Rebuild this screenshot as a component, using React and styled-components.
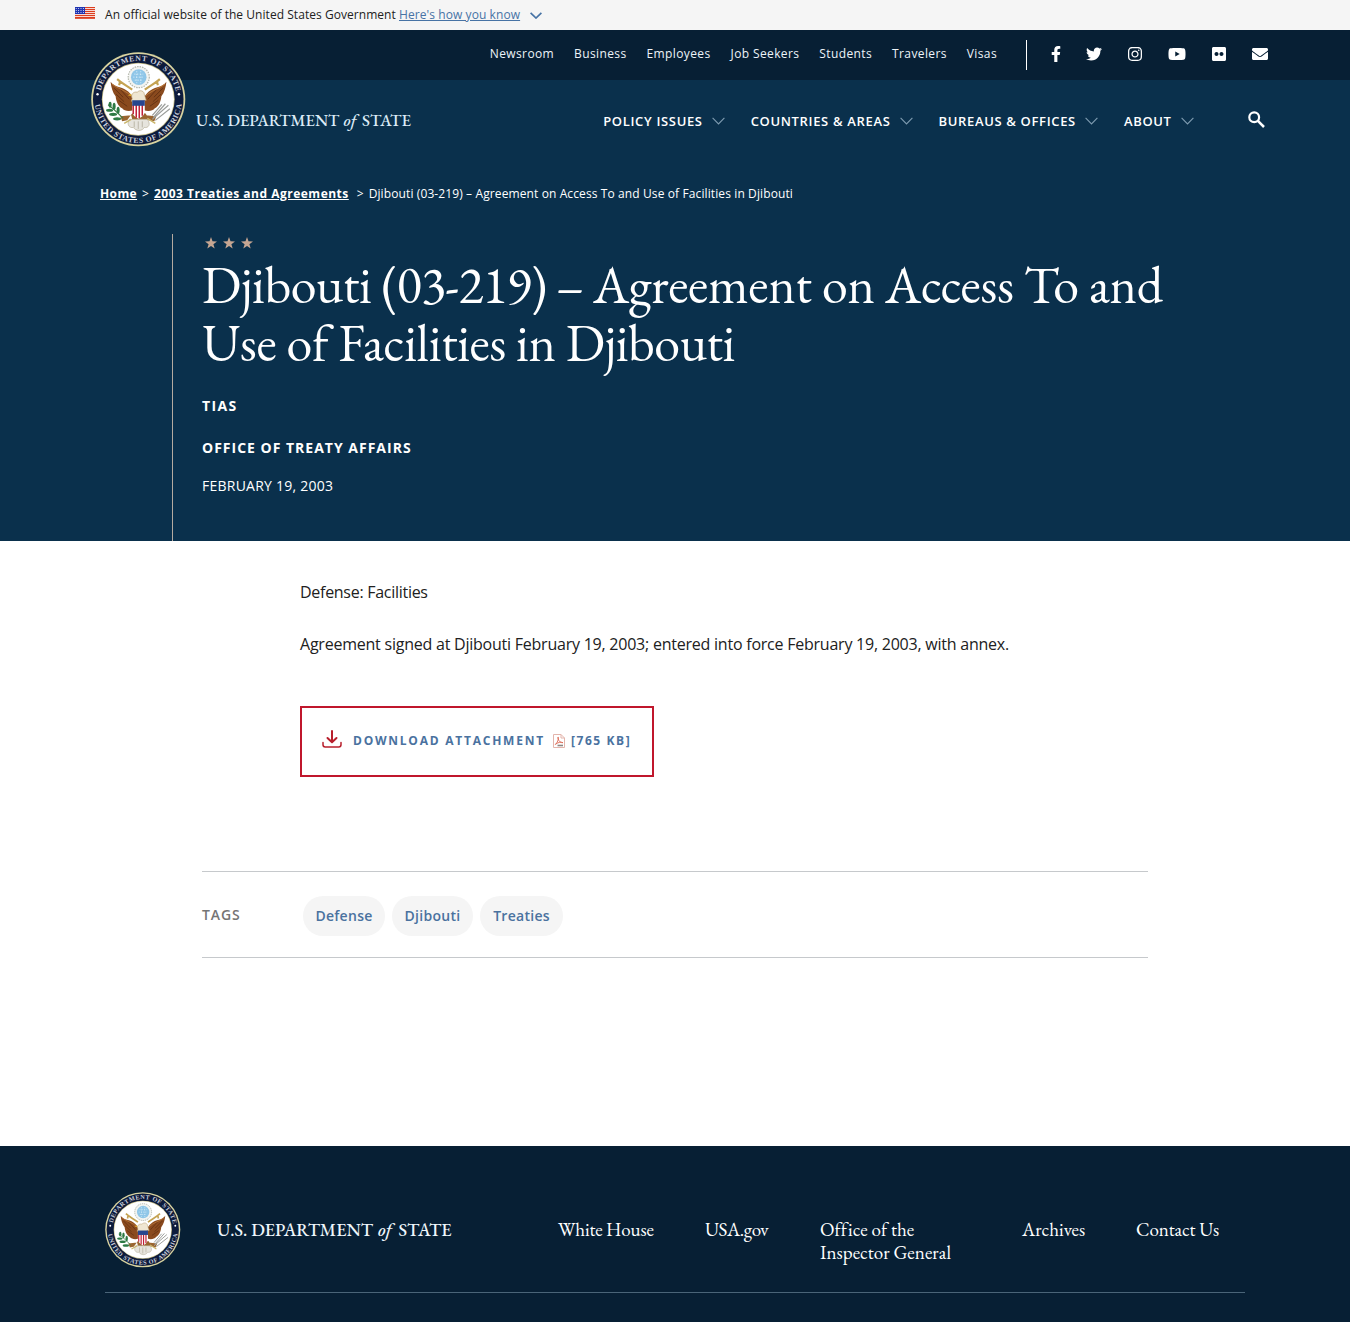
import React from "react";
import styled, { createGlobalStyle } from "styled-components";
import { FaFacebookF, FaTwitter, FaInstagram, FaYoutube, FaFlickr, FaEnvelope } from "react-icons/fa";

const sans = `"Open Sans", "Noto Sans", sans-serif`;
const serif = `"EB Garamond", "Liberation Serif", serif`;

const Global = createGlobalStyle`
  * { box-sizing: border-box; }
  body { margin: 0; background: #fff; font-family: ${sans}; color: #212121; }
  a { color: inherit; text-decoration: none; }
  svg { display: block; flex: none; }
`;

const Page = styled.div`
  width: 1350px;
  height: 1322px;
  overflow: hidden;
  display: flex;
  flex-direction: column;
`;

const Banner = styled.div`
  height: 30px;
  flex: none;
  display: flex;
  align-items: center;
  padding-left: 75px;
  background: #f5f5f5;
  font-size: 12px;
  line-height: 28px;
`;
const BannerFlag = styled.span`
  margin: 0 10px 4px 0;
`;
const BannerText = styled.span`
  letter-spacing: 0.045px;
  white-space: pre;
`;
const BannerLink = styled.a`
  && { color: #4773a5; }
  text-decoration: underline;
  letter-spacing: 0.08px;
  margin-right: 10px;
`;

const Header = styled.header`
  position: relative;
  flex: none;
  color: #fff;
`;
const TopBar = styled.div`
  height: 50px;
  background: #071f34;
  display: flex;
  align-items: center;
  justify-content: flex-end;
  padding: 0 82px 0 0;
`;
const TopLinks = styled.nav`
  display: flex;
  gap: 20px;
  font-size: 12px;
  letter-spacing: 0.38px;
  color: #eef4f9;
  padding-right: 29px;
  padding-bottom: 3px;
`;
const Social = styled.div`
  height: 30px;
  border-left: 1px solid #fff;
  padding: 0 0 2px 24px;
  display: flex;
  align-items: center;
  gap: 26px;
`;
const SocialIcon = styled.span`
  width: ${(p) => p.$w}px;
  margin-right: ${(p) => p.$mr || 0}px;
  display: flex;
  justify-content: center;
`;
const MainBar = styled.div`
  height: 80px;
  background: #0a304c;
  display: flex;
  align-items: center;
  justify-content: flex-end;
  padding: 2px 85px 0 196px;
`;
const Brand = styled.div`
  margin: 0 auto 1px 0;
`;
const MainNav = styled.nav`
  display: flex;
  gap: 25.6px;
  padding-right: 54px;
`;
const NavItem = styled.a`
  display: flex;
  align-items: center;
  gap: 9.4px;
  font-size: 13px;
  font-weight: 600;
  letter-spacing: 0.66px;
  line-height: 20px;
`;
const SearchButton = styled.a`
  padding-bottom: 4px;
`;
const SealHolder = styled.div`
  position: absolute;
  left: 91px;
  top: 22px;
`;

const Hero = styled.section`
  height: 381px;
  flex: none;
  background: #0a304c;
  color: #fff;
  display: flex;
  flex-direction: column;
`;
const Crumbs = styled.div`
  padding: 25px 0 0 100px;
  height: 74px;
  font-size: 12px;
  line-height: 18px;
  display: flex;
  white-space: pre;
`;
const CrumbLink = styled.a`
  font-weight: 700;
  text-decoration: underline;
  letter-spacing: ${(p) => p.$ls || 0}px;
`;
const CrumbSep = styled.span`
  padding: 0 5px 0 ${(p) => p.$left || 5}px;
`;
const CrumbCurrent = styled.span`
  letter-spacing: 0.11px;
`;
const HeroBody = styled.div`
  flex: 1;
  margin-left: 172px;
  border-left: 1px solid #b5aaa0;
  padding: 3px 0 0 29px;
`;
const Title = styled.h1`
  margin: 7px 0 0;
  font-family: ${serif};
  font-weight: 400;
  font-size: 52px;
  line-height: 58px;
  font-variant-numeric: lining-nums;
`;
const TitleLine = styled.span`
  display: block;
  white-space: nowrap;
`;
const Tracked = styled.span`
  letter-spacing: ${(p) => p.$ls}px;
`;
const Kicker = styled.p`
  margin: ${(p) => p.$top}px 0 0;
  font-size: 14px;
  line-height: 20px;
  font-weight: 700;
  letter-spacing: ${(p) => p.$ls}px;
`;
const DateLine = styled.p`
  margin: 18px 0 0;
  font-size: 14px;
  line-height: 20px;
  letter-spacing: 0.24px;
`;

const Article = styled.main`
  flex: 1;
  padding: 38px 0 0 300px;
`;
const Para = styled.p`
  margin: 0 0 26px;
  font-size: 16px;
  line-height: 26px;
  letter-spacing: ${(p) => p.$ls}px;
`;
const Download = styled.a`
  margin-top: 49px;
  width: 354px;
  height: 71px;
  border: 2px solid #c0172c;
  display: flex;
  align-items: center;
  padding: 0 0 2px 20px;
  && { color: #4a729f; }
  font-size: 12px;
  font-weight: 700;
  letter-spacing: 1.6px;
`;
const DownloadGlyph = styled.span`
  padding-bottom: 3px;
`;
const DownloadText = styled.span`
  margin: 0 8px 0 11px;
  letter-spacing: 1.76px;
`;
const FileSize = styled.span`
  margin-left: 6px;
`;

const TagRow = styled.div`
  margin: 94px 0 0 -98px;
  width: 946px;
  height: 87px;
  border-top: 1px solid #c6c9cc;
  border-bottom: 1px solid #c6c9cc;
  display: flex;
  align-items: center;
`;
const TagLabel = styled.span`
  width: 101px;
  padding-bottom: 1px;
  font-size: 14px;
  font-weight: 600;
  letter-spacing: 0.9px;
  color: #757575;
`;
const Tags = styled.div`
  display: flex;
  gap: 7px;
`;
const Tag = styled.a`
  width: ${(p) => p.$w}px;
  height: 40px;
  margin-top: 3px;
  padding-bottom: 2px;
  border-radius: 20px;
  background: #f5f5f5;
  && { color: #4a729f; }
  font-size: 14px;
  font-weight: 600;
  letter-spacing: 0.28px;
  display: flex;
  align-items: center;
  justify-content: center;
`;

const Footer = styled.footer`
  height: 176px;
  flex: none;
  background: #071f34;
  color: #fff;
  padding: 46px 105px 0;
`;
const FooterTop = styled.div`
  height: 101px;
  border-bottom: 1px solid #4a6478;
  display: flex;
  align-items: flex-start;
`;
const FooterBrand = styled.div`
  width: 341px;
  margin: 26px 0 0 36.5px;
`;
const FooterLink = styled.a`
  margin-top: 26px;
  width: ${(p) => p.$w}px;
  font-family: ${serif};
  font-size: 19px;
  line-height: 23px;
  letter-spacing: ${(p) => p.$ls || 0}px;
  white-space: pre-line;
`;

function Chevron({ w, h, color, sw }) {
  return (
    <svg width={w} height={h} viewBox={`0 0 ${w} ${h}`} fill="none" stroke={color} strokeWidth={sw}>
      <path d={`M0.6 0.8 L${w / 2} ${h - 1} L${w - 0.6} 0.8`} />
    </svg>
  );
}

function SearchIcon() {
  return (
    <svg width="17" height="17" viewBox="0 0 17 17" fill="none" stroke="#fff">
      <circle cx="6.200" cy="6.200" r="4.900" strokeWidth="2.200" />
      <path d="M9.900 9.900 L16 16" strokeWidth="2.500" />
    </svg>
  );
}

function Flag() {
  return (
    <svg width="20" height="12" viewBox="0 0 20 12">
      <rect width="20" height="12" fill="#fff" />
      {[0, 2, 4, 6, 8, 10].map((y) => (
        <rect key={y} y={y} width="20" height="1.2" fill="#db3e1f" />
      ))}
      <rect y="11.2" width="20" height=".8" fill="#db3e1f" />
      <rect width="10" height="7" fill="#1e33b1" />
      {[1, 3, 5].map((y) =>
        [1.2, 3.6, 6, 8.4].map((x) => <circle key={x + "-" + y} cx={x} cy={y + 0.5} r=".5" fill="#fff" />)
      )}
    </svg>
  );
}

const WordmarkSvg = styled.svg`
  font-family: ${serif};
  font-weight: 500;
`;

function Wordmark({ width, size, color, words }) {
  return (
    <WordmarkSvg width={width} height="26" viewBox={`0 0 ${width} 26`} fill={color} fontSize={size}>
      {words.map(([text, x, length, italic]) => (
        <text
          key={text}
          x={x}
          y="18"
          fontStyle={italic ? "italic" : "normal"}
          textLength={length}
          lengthAdjust="spacingAndGlyphs"
        >
          {text}
        </text>
      ))}
    </WordmarkSvg>
  );
}

function EagleWing() {
  return (
    <g>
      <path d="M39 59 C44 66 50 68 57 70 C70 73 80 82 85 94 L84 116 C74 119 66 117 62 112 C54 108 50 98 49 88 C43 80 40 70 39 59Z" fill="#8a4a1e" />
      <path d="M46 72 L64 90 M50 84 L66 99 M55 96 L72 108 M58 74 L76 94" stroke="#5d2d10" strokeWidth="1.6" fill="none" />
      <path d="M42 64 C53 73 67 75 80 87" stroke="#b9783a" strokeWidth="2" fill="none" />
    </g>
  );
}

function Seal({ size, id }) {
  return (
    <svg width={size} height={size} viewBox="0 0 188 188">
      <defs>
        <path id={`${id}-top`} d="M17.5 94 A76.5 76.5 0 0 1 170.5 94" />
        <path id={`${id}-bottom`} d="M7 94 A87 87 0 0 0 181 94" />
      </defs>
      <circle cx="94" cy="94" r="93.5" fill="#d8d3a0" />
      <circle cx="94" cy="94" r="90" fill="#0d1b3c" />
      <circle cx="94" cy="94" r="72.5" fill="#c9bf87" />
      <circle cx="94" cy="94" r="71" fill="#fff" />
      <g fill="#cdd2de" fontFamily='"Liberation Serif", serif' fontSize="15.5" fontWeight="700">
        <text textLength="208" lengthAdjust="spacing">
          <textPath href={`#${id}-top`} startOffset="17">DEPARTMENT OF STATE</textPath>
        </text>
        <text textLength="252" lengthAdjust="spacing">
          <textPath href={`#${id}-bottom`} startOffset="11">UNITED STATES OF AMERICA</textPath>
        </text>
      </g>
      <circle cx="13" cy="84" r="2.4" fill="#fff" />
      <circle cx="175" cy="84" r="2.4" fill="#fff" />
      <circle cx="95" cy="50" r="21" fill="#f3f4f1" stroke="#b3b6ab" strokeWidth="2.4" strokeDasharray="3 2" />
      <circle cx="95" cy="50" r="15.5" fill="#8fc6e8" />
      <path d="M86 44h18M84 50h22M87 56h16M91 38v24M99 38v24" stroke="#dff1fb" strokeWidth="1.6" strokeDasharray="2.5 3" />
      <EagleWing />
      <g transform="translate(189 0) scale(-1 1)">
        <EagleWing />
      </g>
      <path d="M52 54 C62 63 70 66 82 75 M58 57 l-2 9 M137 54 C127 63 119 66 107 75 M131 57 l2 9" stroke="#c5a353" strokeWidth="4.2" fill="none" />
      <path d="M72 136 L118 136 L108 122 L82 122Z M58 128 L80 126 L82 134 L62 138Z M130 128 L108 126 L106 134 L126 138Z" fill="#9a6530" />
      <path d="M82 92 C78 86 84 78 92 80 C98 74 106 78 106 84 L110 96 L80 98Z" fill="#efe6d2" stroke="#b59a6a" strokeWidth="1.2" />
      <path d="M80 83 l-7 3 l7 2z" fill="#d9a52c" />
      <path d="M76 134 C70 146 78 152 84 150 C90 158 102 158 106 150 C114 152 120 144 112 134Z" fill="#e6e4dd" stroke="#b0a890" strokeWidth="1.2" />
      <path d="M86 138v12M94 138v15M102 138v12" stroke="#aaa491" strokeWidth="1.4" />
      <path d="M82 97 H107 V117 C107 126 100 130 94.500 133 C89 130 82 126 82 117Z" fill="#fff" />
      <path d="M84 105v19M90 105v26M96 105v27M102 105v22" stroke="#c02138" strokeWidth="3" />
      <path d="M82 96 H107 V107 H82Z" fill="#27468e" />
      <path d="M34 105 C44 112 54 122 64 132" stroke="#3d7a45" strokeWidth="2" fill="none" />
      <g fill="#2d7a44">
        <ellipse cx="38" cy="105" rx="3" ry="6" />
        <ellipse cx="46" cy="108" rx="3" ry="7" />
        <ellipse cx="37" cy="116" rx="7" ry="3" />
        <ellipse cx="54" cy="116" rx="3" ry="7" />
        <ellipse cx="44" cy="124" rx="8" ry="3.200" />
        <ellipse cx="52" cy="133" rx="8" ry="3.200" />
      </g>
      <path d="M122 134 L154 106 M124 130 L148 103 M128 136 L157 113 M122 126 L141 104" stroke="#9b9d9a" strokeWidth="2.4" />
      <path d="M112 132 L128 142 M66 142 L80 134" stroke="#c9b56c" strokeWidth="3" />
    </svg>
  );
}

function Stars() {
  const star = "M6 0 L7.500 4.300 L12 4.400 L8.400 7.200 L9.700 11.600 L6 9 L2.300 11.600 L3.600 7.200 L0 4.400 L4.500 4.300Z";
  return (
    <svg width="54" height="12" viewBox="0 0 54 12" fill="#c6a692">
      {[3, 21, 39].map((x) => (
        <path key={x} d={star} transform={`translate(${x} 0)`} />
      ))}
    </svg>
  );
}

function DownloadIcon() {
  return (
    <svg width="20" height="18" viewBox="0 0 20 18" fill="none" stroke="#b81f2c" strokeWidth="2" strokeLinecap="round" strokeLinejoin="round">
      <path d="M10 1v11M5.500 8l4.500 4.200L14.500 8" />
      <path d="M1 12.500v2.300q0 2.200 2.200 2.200h13.600q2.200 0 2.200-2.200v-2.300" strokeWidth="1.500" />
    </svg>
  );
}

function PdfIcon() {
  return (
    <svg width="12" height="14" viewBox="0 0 12 14" fill="none">
      <path d="M.5.500h7.500l3.500 3.500v9.500H.500z" fill="#fff" stroke="#e3b5ac" />
      <path d="M8 .5v3.500h3.500" stroke="#e3b5ac" />
      <path d="M2.300 10.500C4.500 8.500 5.700 5.500 5.300 3.200C5 2.500 4.500 3.500 5.200 5C6 7.500 8 9 10 8.700C8 7.500 4.500 8.500 2.300 10.500Z" stroke="#dc6a55" strokeWidth=".9" />
      <path d="M4.500 11.500h5.500" stroke="#8d8683" strokeWidth="1.600" />
    </svg>
  );
}

const topLinks = ["Newsroom", "Business", "Employees", "Job Seekers", "Students", "Travelers", "Visas"];
const social = [
  [FaFacebookF, 10, 16, -1],
  [FaTwitter, 16, 16, 0],
  [FaInstagram, 14, 16, 0],
  [FaYoutube, 18, 18, 0],
  [FaFlickr, 14, 16, 0],
  [FaEnvelope, 16, 16, 0],
];
const mainLinks = ["POLICY ISSUES", "COUNTRIES & AREAS", "BUREAUS & OFFICES", "ABOUT"];
const tags = [["Defense", 82], ["Djibouti", 81], ["Treaties", 83]];
const footerLinks = [
  ["White House", 147, -0.15],
  ["USA.gov", 115, -0.4],
  ["Office of the\nInspector General", 202, 0.05],
  ["Archives", 114, 0],
  ["Contact Us", 100, -0.1],
];
const headWords = [["U.S. DEPARTMENT", 0, 143.3], ["of", 147.5, 13, true], ["STATE", 166, 49]];
const footWords = [["U.S. DEPARTMENT", 0, 156], ["of", 161, 14, true], ["STATE", 181.500, 53]];

export default function App() {
  return (
    <Page>
      <Global />
      <Banner>
        <BannerFlag><Flag /></BannerFlag>
        <BannerText>An official website of the United States Government </BannerText>
        <BannerLink href="#">Here's how you know</BannerLink>
        <Chevron w={12} h={7} color="#4773a5" sw={1.7} />
      </Banner>
      <Header>
        <TopBar>
          <TopLinks>
            {topLinks.map((t) => <a href="#" key={t}>{t}</a>)}
          </TopLinks>
          <Social>
            {social.map(([Icon, w, size, mr], i) => (
              <SocialIcon key={i} $w={w} $mr={mr}><Icon size={size} /></SocialIcon>
            ))}
          </Social>
        </TopBar>
        <MainBar>
          <Brand><Wordmark width={216} size={17.3} color="#dcebf7" words={headWords} /></Brand>
          <MainNav>
            {mainLinks.map((t) => (
              <NavItem href="#" key={t}>
                {t}
                <Chevron w={13} h={8} color="#7e9bb0" sw={1.1} />
              </NavItem>
            ))}
          </MainNav>
          <SearchButton href="#"><SearchIcon /></SearchButton>
        </MainBar>
        <SealHolder><Seal size={94.5} id="head" /></SealHolder>
      </Header>
      <Hero>
        <Crumbs>
          <CrumbLink href="#" $ls={0.4}>Home</CrumbLink>
          <CrumbSep>&gt;</CrumbSep>
          <CrumbLink href="#" $ls={0.5}>2003 Treaties and Agreements</CrumbLink>
          <CrumbSep $left={8}>&gt;</CrumbSep>
          <CrumbCurrent>Djibouti (03-219) – Agreement on Access To and Use of Facilities in Djibouti</CrumbCurrent>
        </Crumbs>
        <HeroBody>
          <Stars />
          <Title>
            <TitleLine>
              <Tracked $ls={-0.42}>Djibouti </Tracked>
              <Tracked $ls={-0.87}>(03-219) – </Tracked>
              <Tracked $ls={-0.2}>Agreement on Access To and</Tracked>
            </TitleLine>
            <TitleLine>
              <Tracked $ls={-0.33}>Use of Facilities in </Tracked>
              <Tracked $ls={-0.45}>Djibouti</Tracked>
            </TitleLine>
          </Title>
          <Kicker $top={24} $ls={1.4}>TIAS</Kicker>
          <Kicker $top={22} $ls={1}>OFFICE OF TREATY AFFAIRS</Kicker>
          <DateLine>FEBRUARY 19, 2003</DateLine>
        </HeroBody>
      </Hero>
      <Article>
        <Para $ls={-0.28}>Defense: Facilities</Para>
        <Para $ls={-0.23}>Agreement signed at Djibouti February 19, 2003; entered into force February 19, 2003, with annex.</Para>
        <Download href="#">
          <DownloadGlyph><DownloadIcon /></DownloadGlyph>
          <DownloadText>DOWNLOAD ATTACHMENT</DownloadText>
          <PdfIcon />
          <FileSize>[765 KB]</FileSize>
        </Download>
        <TagRow>
          <TagLabel>TAGS</TagLabel>
          <Tags>
            {tags.map(([t, w]) => <Tag href="#" key={t} $w={w}>{t}</Tag>)}
          </Tags>
        </TagRow>
      </Article>
      <Footer>
        <FooterTop>
          <Seal size={75.5} id="foot" />
          <FooterBrand><Wordmark width={236} size={18.4} color="#eef6fb" words={footWords} /></FooterBrand>
          {footerLinks.map(([t, w, ls]) => <FooterLink href="#" key={t} $w={w} $ls={ls}>{t}</FooterLink>)}
        </FooterTop>
      </Footer>
    </Page>
  );
}
